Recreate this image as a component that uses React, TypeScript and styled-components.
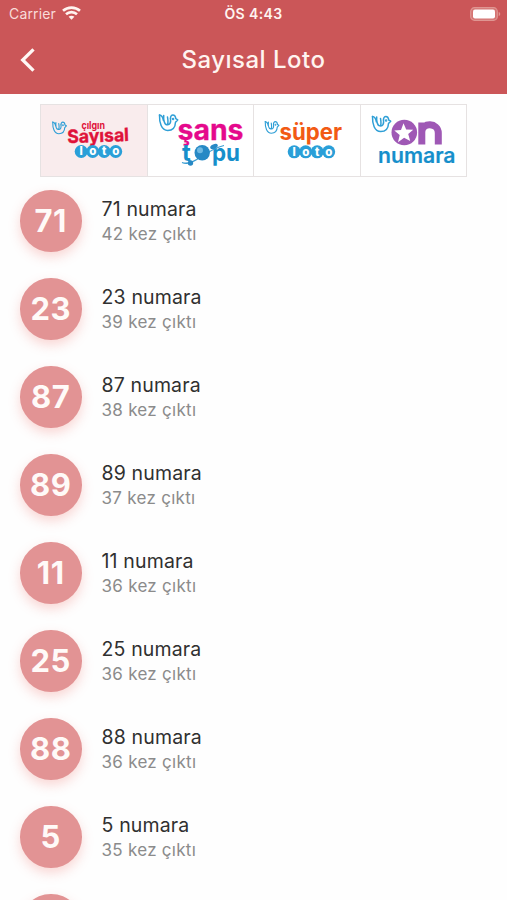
import React from "react";
import styled, { createGlobalStyle } from "styled-components";

const GlobalStyle = createGlobalStyle`
  * { box-sizing: border-box; }
  body { margin: 0; background: #fff; overflow: hidden; }
`;

const Screen = styled.div`
  height: 900px;
  overflow: hidden;
  background: #fefefe;
  font-family: Inter, "Liberation Sans", sans-serif;
`;

const Header = styled.header`
  height: 93.5px;
  background: #cb5658;
  color: #fff4f0;
`;

const StatusBar = styled.div`
  display: grid;
  grid-template-columns: 1fr auto 1fr;
  align-items: center;
  height: 27px;
  padding: 0 6px 0 9px;
`;

const Carrier = styled.div`
  display: flex;
  align-items: center;
  gap: 6px;
  font-size: 14px;
  letter-spacing: 0.15px;
  color: #f9dcd9;
`;

const Clock = styled.div`
  margin-left: -3px;
  font-size: 14px;
  font-weight: 600;
  letter-spacing: 0.4px;
`;

const BatterySlot = styled.div`
  display: flex;
  justify-content: flex-end;
`;

const NavBar = styled.div`
  display: grid;
  grid-template-columns: 60px 1fr 60px;
  align-items: center;
  height: 66px;
`;

const BackButton = styled.button`
  display: flex;
  padding: 0 0 0 18px;
  border: 0;
  background: none;
`;

const Title = styled.h1`
  margin: 0;
  text-align: center;
  font-size: 24px;
  line-height: 30px;
  font-weight: 500;
  letter-spacing: 0.5px;
`;

const Tabs = styled.nav`
  display: grid;
  grid-template-columns: 107px 106px 107px 106px;
  width: 427px;
  height: 73px;
  margin: 10.5px 0 0 40px;
  border: 1px solid #e6e2e2;
  border-left: 0;
`;

const Tab = styled.button<{ $active?: boolean }>`
  display: flex;
  padding: 0;
  border: 0;
  border-left: 1px solid #e6e2e2;
  background: ${(p) => (p.$active ? "#f9eced" : "#fff")};
  overflow: hidden;
`;

const Logo = styled.svg`
  flex: none;
  display: block;
  font-family: Inter, sans-serif;
`;

const List = styled.ul`
  margin: 13px 0 0;
  padding: 0 0 0 20px;
  list-style: none;
`;

const Row = styled.li`
  display: flex;
  gap: 20px;
  height: 88px;
`;

const Ball = styled.div`
  display: flex;
  align-items: center;
  justify-content: center;
  flex: none;
  width: 61.5px;
  height: 61.5px;
  border-radius: 50%;
  background: #e29394;
  box-shadow: 0 5px 12px rgba(238, 130, 125, 0.32);
  color: #fffaf8;
  font-size: 31px;
  font-weight: 700;
  letter-spacing: 0.6px;
`;

const Info = styled.div`
  padding-top: 6px;
`;

const Name = styled.div`
  font-size: 19.5px;
  line-height: 26px;
  letter-spacing: 0.15px;
  color: #303030;
`;

const Count = styled.div`
  font-size: 17px;
  line-height: 24px;
  letter-spacing: 0.28px;
  color: #8b8b8b;
`;

function Wing({ x, y, w, h }: { x: number; y: number; w: number; h: number }) {
  return (
    <g
      transform={`translate(${x} ${y}) scale(${w / 20} ${h / 18})`}
      fill="none"
      stroke="#2f9fd6"
      strokeWidth="1.500"
      strokeLinecap="round"
      strokeLinejoin="round"
    >
      <path d="M1 1.500C.8 9 2.800 17 9.200 17c5 0 7.600-3.600 7.800-8.300l2.200-2.300-1.900-1.200C16.700.2 11.800.4 12 5" />
      <path d="M1 1.500c2.300.2 3.400 2.500 3.900 5.500M5.200 2c-.3 4 .6 9 3 9.200C10 11.200 9.500 6.500 9 3.500M8.200 11.200C11.300 12 12.600 9 12 5" />
      <circle cx="14.600" cy="5.600" r=".5" />
    </g>
  );
}

function LotoDiscs({ y }: { y: number }) {
  return (
    <g>
      {["l", "o", "t", "o"].map((letter, i) => (
        <g key={i}>
          <circle cx={40.2 + i * 11.5} cy={y} r="6.500" fill="#2a9fd8" />
          <text x={40.2 + i * 11.5} y={y + 3.7} textAnchor="middle" fontSize="11.500" fontWeight="800" fill="#fff">
            {letter}
          </text>
        </g>
      ))}
    </g>
  );
}

const SayisalLogo = () => (
  <Logo width="106" height="71" viewBox="0 0 106 71">
    <Wing x={11} y={16} w={15} h={13.5} />
    <g fill="#df1239" stroke="#df1239">
      <text x="40.500" y="23.800" fontSize="10" fontWeight="700" strokeWidth="0" textLength="23.500" lengthAdjust="spacingAndGlyphs">çılgın</text>
      <text x="26.500" y="37" fontSize="18" fontWeight="700" strokeWidth=".4" textLength="61.500" lengthAdjust="spacingAndGlyphs" transform="rotate(-2 56 34)">Sayısal</text>
    </g>
    <LotoDiscs y={46.5} />
  </Logo>
);

const SansLogo = () => (
  <Logo width="105" height="71" viewBox="0 0 105 71">
    <Wing x={10.5} y={8.5} w={20} h={18} />
    <text x="29.500" y="35" fontSize="28" fontWeight="700" fill="#e5098c" stroke="#e5098c" strokeWidth=".3" textLength="66" lengthAdjust="spacingAndGlyphs">şans</text>
    <g fill="#168fcb">
      <text x="34" y="56" fontSize="24" fontWeight="700">t</text>
      <text x="64" y="56" fontSize="24" fontWeight="700" textLength="28" lengthAdjust="spacingAndGlyphs">pu</text>
    </g>
    <path d="M34 57.500c6 2.500 12-1 18-5s15-10 24-12" fill="none" stroke="#3a9ed3" strokeWidth="1.200" />
    <circle cx="54.200" cy="47.800" r="7.700" fill="#2789c5" />
    <circle cx="52" cy="45.300" r="3" fill="#6fb9e2" />
    <circle cx="42.500" cy="58" r="2.700" fill="#2789c5" />
    <ellipse cx="66" cy="41.500" rx="4" ry="2.300" fill="#2789c5" transform="rotate(-25 66 41.500)" />
  </Logo>
);

const SuperLogo = () => (
  <Logo width="106" height="71" viewBox="0 0 106 71">
    <Wing x={10.5} y={15.5} w={15} h={13.5} />
    <text x="25.500" y="34.500" fill="#f25a14" fontWeight="700" fontSize="22.500" textLength="62.500" lengthAdjust="spacingAndGlyphs">süper</text>
    <LotoDiscs y={46.8} />
  </Logo>
);

const OnLogo = () => (
  <Logo width="105" height="71" viewBox="0 0 105 71">
    <Wing x={10.5} y={10} w={20} h={17.5} />
    <circle cx="43.300" cy="27.500" r="12.800" fill="#9f58b5" />
    <path d="m42.500 18.300 2.700 6.200 7 .2-5 4.400 2 6.900-6.100-3.300-6.100 4.500 1.700-7.300-5.400-4.400 6.700-.6z" fill="#fff" />
    <path d="M60.800 39.500v-22M60.800 27c0-10 16.500-9.500 16.500 1v11.500" fill="none" stroke="#9f58b5" strokeWidth="7" />
    <text x="17" y="58" fontSize="21" fontWeight="600" fill="#168fcb" stroke="#168fcb" strokeWidth=".2" textLength="77.500" lengthAdjust="spacingAndGlyphs">numara</text>
  </Logo>
);

const WifiIcon = () => (
  <svg width="19" height="15" viewBox="0 0 19 15" fill="none" stroke="#fff4f0" strokeWidth="2.600">
    <path d="M1 4.800c4.800-4.300 12.200-4.300 17 0M4 8.300c3.100-2.900 7.900-2.900 11 0" />
    <path d="m9.500 13.800 2.900-3c-1.600-1.500-4.200-1.500-5.800 0z" fill="#fff4f0" stroke="none" />
  </svg>
);

const BatteryIcon = () => (
  <svg width="31" height="14" viewBox="0 0 31 14">
    <rect x=".7" y=".7" width="26.600" height="12.600" rx="3.800" fill="#d57473" stroke="#df9692" strokeWidth="1.200" />
    <rect x="3" y="2.500" width="22" height="9" rx="2" fill="#fff" />
    <path d="M28.700 5c2 .5 2 3.500 0 4z" fill="#df9692" />
  </svg>
);

const BackIcon = () => (
  <svg width="18" height="26" viewBox="0 0 18 26" fill="none" stroke="#fff8f5" strokeWidth="3.300">
    <path d="M15.500 2.300 4.700 13l10.800 10.700" />
  </svg>
);

const numbers = [
  { number: 71, count: 42 },
  { number: 23, count: 39 },
  { number: 87, count: 38 },
  { number: 89, count: 37 },
  { number: 11, count: 36 },
  { number: 25, count: 36 },
  { number: 88, count: 36 },
  { number: 5, count: 35 },
];

export default function App() {
  return (
    <Screen>
      <GlobalStyle />
      <Header>
        <StatusBar>
          <Carrier>
            Carrier
            <WifiIcon />
          </Carrier>
          <Clock>ÖS 4:43</Clock>
          <BatterySlot>
            <BatteryIcon />
          </BatterySlot>
        </StatusBar>
        <NavBar>
          <BackButton>
            <BackIcon />
          </BackButton>
          <Title>Sayısal Loto</Title>
        </NavBar>
      </Header>
      <Tabs>
        <Tab $active><SayisalLogo /></Tab>
        <Tab><SansLogo /></Tab>
        <Tab><SuperLogo /></Tab>
        <Tab><OnLogo /></Tab>
      </Tabs>
      <List>
        {numbers.map((item) => (
          <Row key={item.number}>
            <Ball>{item.number}</Ball>
            <Info>
              <Name>{item.number} numara</Name>
              <Count>{item.count} kez çıktı</Count>
            </Info>
          </Row>
        ))}
        <Row>
          <Ball />
        </Row>
      </List>
    </Screen>
  );
}
